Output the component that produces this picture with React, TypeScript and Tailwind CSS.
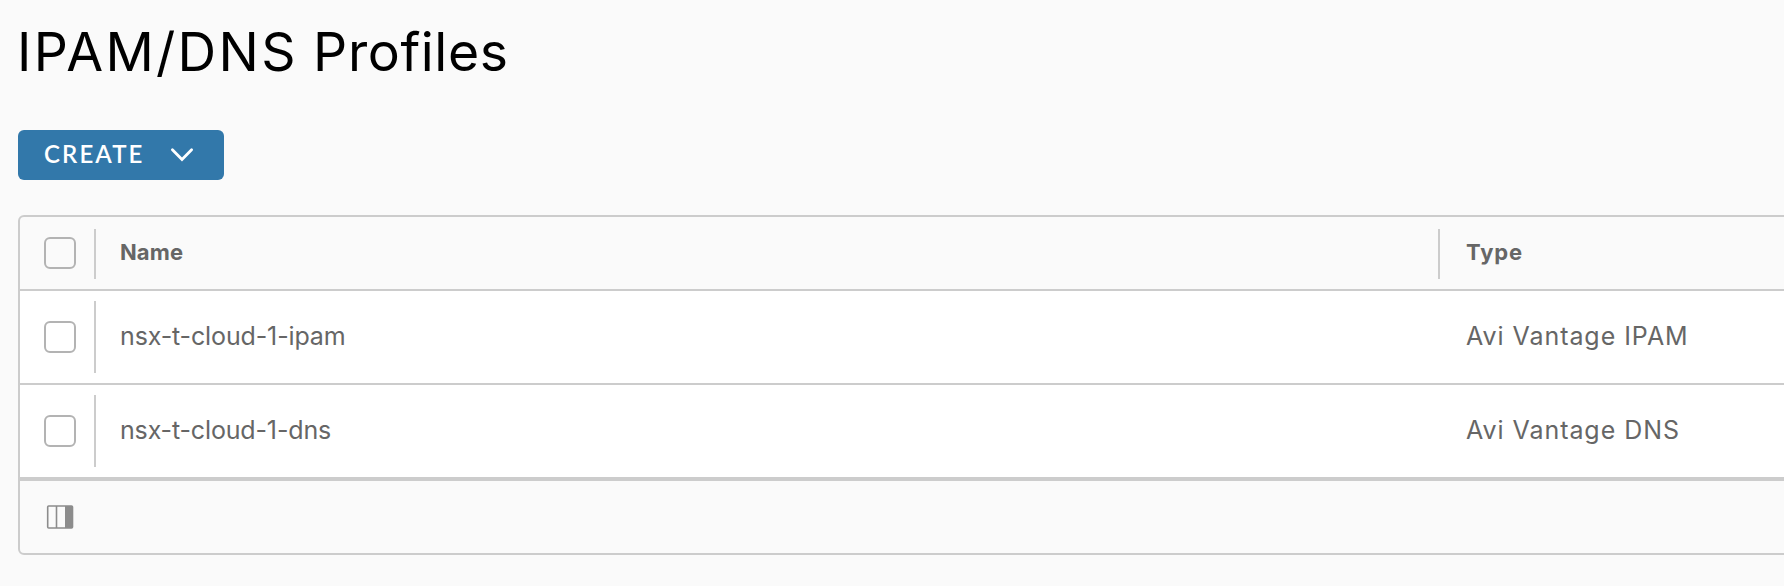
const rows = [
  { name: 'nsx-t-cloud-1-ipam', type: 'Avi Vantage IPAM', nameClass: 'tracking-[-0.13px]', typeClass: 'tracking-[0.95px]' },
  { name: 'nsx-t-cloud-1-dns', type: 'Avi Vantage DNS', nameClass: 'tracking-[-0.15px]', typeClass: 'tracking-[0.95px]' },
];

function Checkbox({ label }: { label: string }) {
  return (
    <input
      type="checkbox"
      aria-label={label}
      className="ml-6 block size-8 shrink-0 appearance-none rounded-[6px] border-2 border-[#b3b3b3]"
    />
  );
}

export default function App() {
  return (
    <main className="h-[586px] overflow-hidden bg-[#fafafa] pl-[18px] font-['Inter',sans-serif] text-[#666666]">
      <h1 className="flex h-[130px] items-start pt-[19px] text-[53.5px] leading-[65px] font-normal whitespace-pre text-black">
        <span className="-ml-px tracking-[2.3px]">IPAM/DNS </span>
        <span className="-ml-[2px] tracking-[0.6px]">Profiles</span>
      </h1>
      <button className="flex h-[50px] w-[206px] items-center rounded-[6px] bg-[#3278aa] pl-[26px] font-['Lato',sans-serif] text-[24px] leading-none font-semibold text-white">
        <span className="w-[126px] pb-0.5 text-left tracking-[2.1px]">CREATE</span>
        <svg width="24" height="16" viewBox="0 0 24 16" fill="none" stroke="currentColor" strokeWidth="2.8" strokeLinecap="round">
          <path d="M2.4 2.8 12 12.6 21.6 2.8" />
        </svg>
      </button>
      <section className="mt-[35px] h-[340px] w-[1780px] rounded-[6px] border-2 border-[#cccccc]">
        <div className="flex h-[74px] items-center border-b-2 border-[#cccccc] text-[22px] font-bold">
          <Checkbox label="Select all" />
          <div className="mt-0.5 ml-[18px] h-[50px] w-0.5 shrink-0 bg-[#cccccc]" />
          <span className="w-[1342px] shrink-0 pb-0.5 pl-6 leading-[30px] tracking-[0.1px]">Name</span>
          <div className="mt-0.5 h-[50px] w-0.5 shrink-0 bg-[#cccccc]" />
          <span className="pb-0.5 pl-[26px] leading-[30px] tracking-[0.9px]">Type</span>
        </div>
        {rows.map((r, i) => (
          <div
            key={r.name}
            className={`flex items-center border-[#cccccc] bg-white text-[25px] font-normal ${i === 0 ? 'h-[94px] border-b-2' : 'h-24 border-b-4'}`}
          >
            <Checkbox label={r.name} />
            <div className="ml-[18px] h-[72px] w-0.5 shrink-0 bg-[#cccccc]" />
            <span className={`w-[1370px] shrink-0 pl-6 ${r.nameClass}`}>{r.name}</span>
            <span className={`whitespace-nowrap ${r.typeClass}`}>{r.type}</span>
          </div>
        ))}
        <footer className="flex h-[72px] items-center pl-[26px]">
          <svg width="28" height="24" viewBox="0 0 28 24" fill="none">
            <rect x="1.7" y="1" width="24.8" height="22" rx="1" stroke="#8c8c8c" strokeWidth="1.6" />
            <path d="M10.5 1v22" stroke="#8c8c8c" strokeWidth="1.6" />
            <path d="M19 1h8v22h-8z" fill="#8c8c8c" />
          </svg>
        </footer>
      </section>
    </main>
  );
}
